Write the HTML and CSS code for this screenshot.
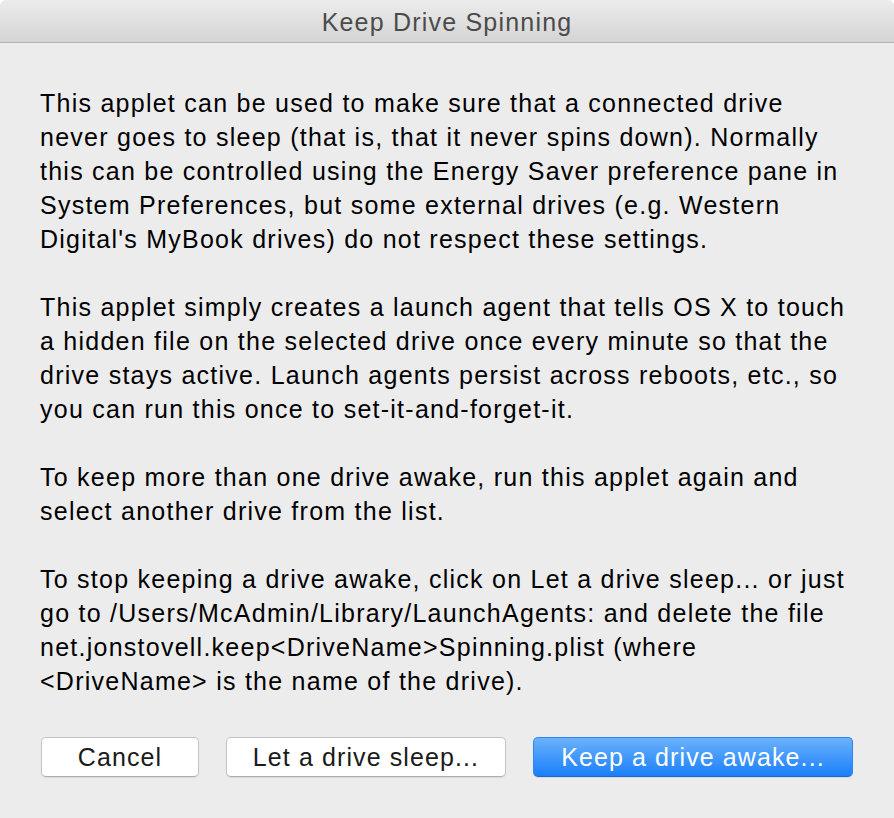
FILE: index.html
```html
<!DOCTYPE html>
<html lang="en">
<head>
  <meta charset="UTF-8" />
  <meta name="viewport" content="width=device-width, initial-scale=1.0" />
  <title>Keep Drive Spinning</title>
  <link rel="stylesheet" href="styles.css">
</head>
<body>

  <div class="window">
    <div class="titlebar">Keep Drive Spinning</div>

    <div class="content">
      <p>This applet can be used to make sure that a connected drive never goes to sleep (that is, that it never spins down). Normally this can be controlled using the Energy Saver preference pane in System Preferences, but some external drives (e.g. Western Digital's MyBook drives) do not respect these settings.</p>

      <p>This applet simply creates a launch agent that tells OS X to touch a hidden file on the selected drive once every minute so that the drive stays active. Launch agents persist across reboots, etc., so you can run this once to set-it-and-forget-it.</p>

      <p>To keep more than one drive awake, run this applet again and select another drive from the list.</p>

      <p>To stop keeping a drive awake, click on Let a drive sleep... or just go to /Users/McAdmin/Library/LaunchAgents: and delete the file net.jonstovell.keep&lt;DriveName&gt;Spinning.plist (where &lt;DriveName&gt; is the name of the drive).</p>

      <div class="buttons">
        <button class="btn btn-cancel">Cancel</button>
        <button class="btn btn-sleep">Let a drive sleep...</button>
        <button class="btn btn-default btn-awake">Keep a drive awake...</button>
      </div>
    </div>
  </div>

</body>
</html>
```

FILE: styles.css
```css
html, body {
  margin: 0;
  padding: 0;
  background: #ffffff;
}
body {
  font-family: "Liberation Sans", Arial, Helvetica, sans-serif;
  color: #000;
}
.window {
  width: 894px;
  height: 818px;
  background-color: #ececec;
  border-radius: 6px 6px 0 0;
  overflow: hidden;
}
.titlebar {
  height: 42px;
  line-height: 44px;
  text-align: center;
  font-size: 25px;
  letter-spacing: 1.2px;
  color: #4b4b4b;
  background: linear-gradient(#ececec, #d4d4d4);
  border-bottom: 1px solid #b3b3b3;
}
.content {
  width: 816px;
  padding: 43px 0 0 40px;
}
p {
  margin: 0 0 34px 0;
  font-size: 25px;
  line-height: 34px;
  letter-spacing: 1.25px;
}
.buttons {
  display: flex;
  gap: 27px;
  margin-top: 39px;
  padding-left: 1px;
}
.btn {
  height: 40px;
  font-family: inherit;
  font-size: 25px;
  letter-spacing: 1.1px;
  color: #1a1a1a;
  background: #ffffff;
  border: 1px solid #c4c4c4;
  border-bottom-color: #adadad;
  border-radius: 5px;
  box-shadow: 0 1px 1px rgba(0, 0, 0, 0.08);
  padding: 0;
}
.btn-cancel {
  width: 158px;
}
.btn-sleep {
  width: 280px;
}
.btn-awake {
  width: 320px;
}
.btn-default {
  color: #ffffff;
  background: linear-gradient(#6bb2fb, #1a7ffb);
  border: 1px solid #2c86f3;
  border-bottom-color: #1766d8;
}
```
